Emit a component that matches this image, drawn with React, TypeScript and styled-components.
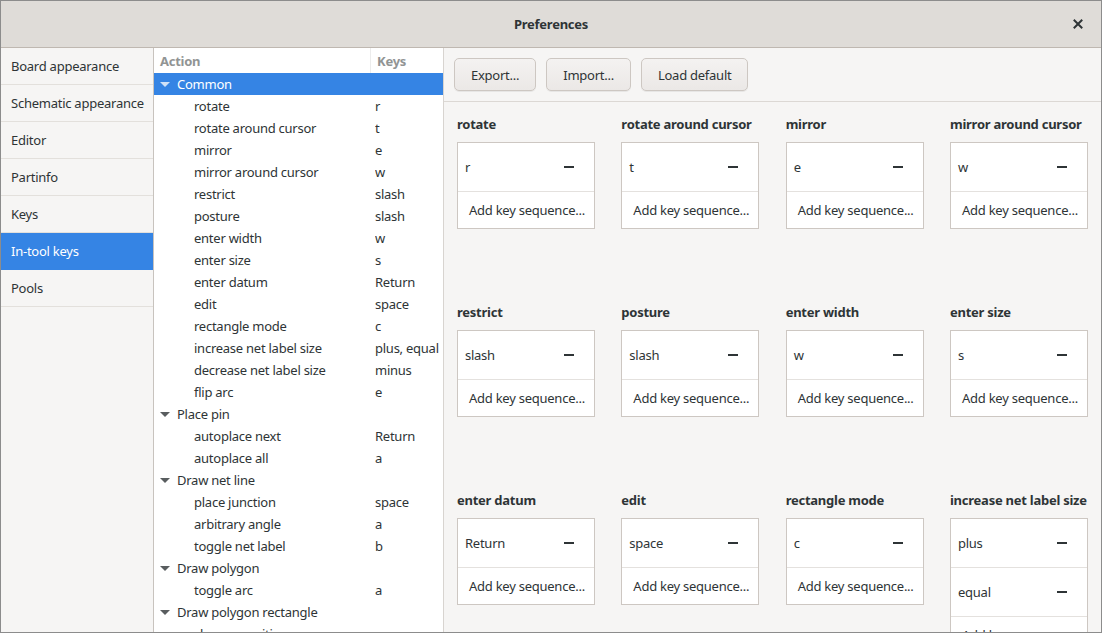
import React from "react";
import styled, { createGlobalStyle } from "styled-components";

const Global = createGlobalStyle`
  html, body { margin: 0; padding: 0; background: #ffffff; }
  body { font-family: "Noto Sans", "DejaVu Sans", sans-serif; font-size: 13px; letter-spacing: -0.25px; color: #2e3436; }
  * { box-sizing: border-box; }
`;

const Window = styled.div`
  width: 1102px;
  height: 633px;
  border: 1px solid #8c8c8c;
  display: flex;
  flex-direction: column;
  overflow: hidden;
  background: #f6f5f4;
`;

const TitleBar = styled.div`
  height: 47px;
  flex: none;
  background: #dfdcd8;
  border-bottom: 1px solid #bfb8b1;
  display: flex;
  align-items: center;
  justify-content: center;
  position: relative;
`;

const Title = styled.div`
  font-weight: bold;
  font-size: 13px;
  color: #2e3436;
`;

const CloseButton = styled.div`
  position: absolute;
  right: 14px;
  top: 14px;
  width: 18px;
  height: 18px;
  display: flex;
  align-items: center;
  justify-content: center;
`;

const Body = styled.div`
  flex: 1;
  display: flex;
  min-height: 0;
`;

const Sidebar = styled.div`
  width: 153px;
  flex: none;
  border-right: 1px solid #c8c3be;
  background: #f6f5f4;
  display: flex;
  flex-direction: column;
`;

const SideItem = styled.div<{ $active?: boolean }>`
  height: 37px;
  flex: none;
  display: flex;
  align-items: center;
  padding-left: 10px;
  border-bottom: 1px solid ${(p) => (p.$active ? "#3584e4" : "#e3e0dc")};
  background: ${(p) => (p.$active ? "#3584e4" : "transparent")};
  color: ${(p) => (p.$active ? "#ffffff" : "#2e3436")};
  white-space: nowrap;
`;

const TreePanel = styled.div`
  width: 290px;
  flex: none;
  background: #ffffff;
  border-right: 1px solid #d8d4d0;
  overflow: hidden;
  display: flex;
  flex-direction: column;
`;

const TreeHeader = styled.div`
  height: 25px;
  flex: none;
  display: grid;
  grid-template-columns: 216px 1fr;
  color: #919494;
  font-weight: bold;
`;

const HeaderCell = styled.div<{ $sep?: boolean }>`
  display: flex;
  align-items: center;
  padding-left: 6px;
  border-left: ${(p) => (p.$sep ? "1px solid #ececec" : "none")};
`;

const TreeRow = styled.div<{ $selected?: boolean }>`
  height: 22px;
  flex: none;
  display: grid;
  grid-template-columns: 221px 1fr;
  align-items: center;
  background: ${(p) => (p.$selected ? "#3584e4" : "transparent")};
  color: ${(p) => (p.$selected ? "#ffffff" : "#2e3436")};
  white-space: nowrap;
`;

const ActionCell = styled.div<{ $child?: boolean }>`
  display: flex;
  align-items: center;
  padding-left: ${(p) => (p.$child ? "40px" : "6px")};
  gap: 7px;
  overflow: hidden;
`;

const KeyCell = styled.div`
  overflow: hidden;
`;

const Expander = styled.span<{ $light?: boolean }>`
  width: 0;
  height: 0;
  border-left: 5px solid transparent;
  border-right: 5px solid transparent;
  border-top: 5px solid ${(p) => (p.$light ? "#cfe1f7" : "#595d5f")};
  display: inline-block;
`;

const Main = styled.div`
  flex: 1;
  display: flex;
  flex-direction: column;
  min-width: 0;
  background: #f6f5f4;
`;

const Toolbar = styled.div`
  height: 54px;
  flex: none;
  display: flex;
  align-items: flex-start;
  gap: 10px;
  padding: 10px 10px 0 10px;
  border-bottom: 1px solid #dcd8d4;
`;

const Button = styled.div`
  height: 33px;
  padding: 0 16px;
  display: flex;
  align-items: center;
  border: 1px solid #cdc7c2;
  border-radius: 5px;
  background: linear-gradient(#f4f2f1, #ebe8e6);
  box-shadow: 0 1px 0 rgba(0, 0, 0, 0.06);
  color: #2e3436;
`;

const Grid = styled.div`
  flex: 1;
  display: grid;
  grid-template-columns: repeat(4, 138px);
  justify-content: space-between;
  grid-auto-rows: 176px;
  row-gap: 12px;
  padding: 13px 13px 0 13px;
  overflow: hidden;
`;

const Item = styled.div`
  display: flex;
  flex-direction: column;
`;

const ItemLabel = styled.div`
  height: 18px;
  line-height: 18px;
  font-weight: bold;
  margin-bottom: 9px;
  white-space: nowrap;
`;

const Card = styled.div`
  border: 1px solid #cdc7c2;
  background: #ffffff;
  display: flex;
  flex-direction: column;
`;

const KeyRow = styled.div`
  height: 49px;
  flex: none;
  display: flex;
  align-items: center;
  justify-content: space-between;
  padding: 0 20px 0 7px;
  border-bottom: 1px solid #e4e1de;
`;

const Minus = styled.span`
  width: 10px;
  height: 2px;
  background: #2e3436;
  display: inline-block;
`;

const AddRow = styled.div`
  height: 36px;
  flex: none;
  display: flex;
  align-items: center;
  padding-left: 11px;
  white-space: nowrap;
`;

type Row = { label: string; keys?: string; group?: boolean; selected?: boolean };

const rows: Row[] = [
  { label: "Common", group: true, selected: true },
  { label: "rotate", keys: "r" },
  { label: "rotate around cursor", keys: "t" },
  { label: "mirror", keys: "e" },
  { label: "mirror around cursor", keys: "w" },
  { label: "restrict", keys: "slash" },
  { label: "posture", keys: "slash" },
  { label: "enter width", keys: "w" },
  { label: "enter size", keys: "s" },
  { label: "enter datum", keys: "Return" },
  { label: "edit", keys: "space" },
  { label: "rectangle mode", keys: "c" },
  { label: "increase net label size", keys: "plus, equal" },
  { label: "decrease net label size", keys: "minus" },
  { label: "flip arc", keys: "e" },
  { label: "Place pin", group: true },
  { label: "autoplace next", keys: "Return" },
  { label: "autoplace all", keys: "a" },
  { label: "Draw net line", group: true },
  { label: "place junction", keys: "space" },
  { label: "arbitrary angle", keys: "a" },
  { label: "toggle net label", keys: "b" },
  { label: "Draw polygon", group: true },
  { label: "toggle arc", keys: "a" },
  { label: "Draw polygon rectangle", group: true },
  { label: "change position", keys: "" },
];

const cards: { label: string; keys: string[] }[] = [
  { label: "rotate", keys: ["r"] },
  { label: "rotate around cursor", keys: ["t"] },
  { label: "mirror", keys: ["e"] },
  { label: "mirror around cursor", keys: ["w"] },
  { label: "restrict", keys: ["slash"] },
  { label: "posture", keys: ["slash"] },
  { label: "enter width", keys: ["w"] },
  { label: "enter size", keys: ["s"] },
  { label: "enter datum", keys: ["Return"] },
  { label: "edit", keys: ["space"] },
  { label: "rectangle mode", keys: ["c"] },
  { label: "increase net label size", keys: ["plus", "equal"] },
];

const sideItems = [
  "Board appearance",
  "Schematic appearance",
  "Editor",
  "Partinfo",
  "Keys",
  "In-tool keys",
  "Pools",
];

export default function App() {
  return (
    <>
      <Global />
      <Window>
        <TitleBar>
          <Title>Preferences</Title>
          <CloseButton>
            <svg width="10" height="10" viewBox="0 0 10 10">
              <path d="M1.5 1.5 L8.5 8.5 M8.5 1.5 L1.5 8.5" stroke="#2e3436" strokeWidth="2" strokeLinecap="square" />
            </svg>
          </CloseButton>
        </TitleBar>
        <Body>
          <Sidebar>
            {sideItems.map((s) => (
              <SideItem key={s} $active={s === "In-tool keys"}>
                {s}
              </SideItem>
            ))}
          </Sidebar>
          <TreePanel>
            <TreeHeader>
              <HeaderCell>Action</HeaderCell>
              <HeaderCell $sep>Keys</HeaderCell>
            </TreeHeader>
            {rows.map((r, i) => (
              <TreeRow key={i} $selected={r.selected}>
                <ActionCell $child={!r.group}>
                  {r.group && <Expander $light={r.selected} />}
                  <span>{r.label}</span>
                </ActionCell>
                <KeyCell>{r.keys}</KeyCell>
              </TreeRow>
            ))}
          </TreePanel>
          <Main>
            <Toolbar>
              <Button>Export...</Button>
              <Button>Import...</Button>
              <Button>Load default</Button>
            </Toolbar>
            <Grid>
              {cards.map((c) => (
                <Item key={c.label}>
                  <ItemLabel>{c.label}</ItemLabel>
                  <Card>
                    {c.keys.map((k) => (
                      <KeyRow key={k}>
                        <span>{k}</span>
                        <Minus />
                      </KeyRow>
                    ))}
                    <AddRow>Add key sequence...</AddRow>
                  </Card>
                </Item>
              ))}
            </Grid>
          </Main>
        </Body>
      </Window>
    </>
  );
}
